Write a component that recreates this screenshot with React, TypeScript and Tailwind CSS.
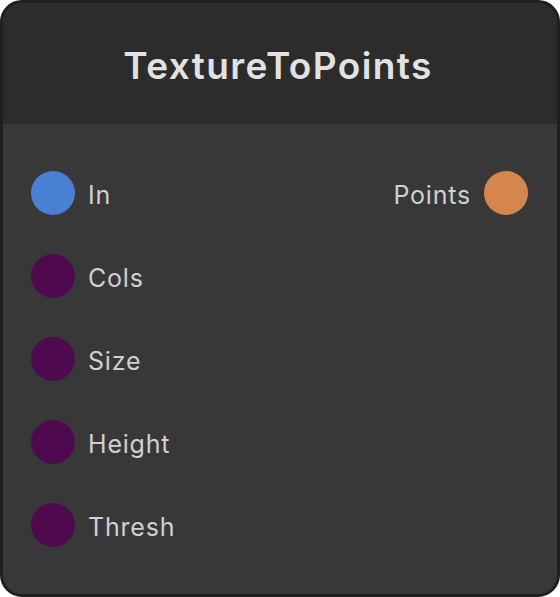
const inputs = ["In", "Cols", "Size", "Height", "Thresh"]

function Port({ color }: { color: string }) {
  return <span className={`block w-[44px] h-[44px] rounded-full shrink-0 ${color}`} />
}

export default function App() {
  return (
    <div className="w-[560px] h-[597px] bg-white">
      <div
        className="w-full h-full rounded-[22px] border-[3px] border-[#1f1f1f] bg-[#383838] overflow-hidden flex flex-col"
        style={{ fontFamily: "Inter, 'Noto Sans', sans-serif" }}
      >
        <div className="h-[121px] bg-[#2c2c2c] flex items-center justify-center shrink-0 pt-[5px] pr-[4px]">
          <h1 className="text-[37px] font-semibold tracking-[1.4px] text-[#e2e2e2]">TextureToPoints</h1>
        </div>
        <div className="flex justify-between pt-[47px] pl-[28px] pr-[29px]">
          <div className="flex flex-col gap-[39px]">
            {inputs.map((label, i) => (
              <div key={label} className="flex items-center gap-[13px]">
                <Port color={i === 0 ? "bg-[#4a80d4]" : "bg-[#4f0a4f]"} />
                <span className="text-[25px] tracking-[0.8px] text-[#d0d0d0] pt-[5px]">{label}</span>
              </div>
            ))}
          </div>
          <div className="flex items-start">
            <div className="flex items-center gap-[13px]">
              <span className="text-[25px] tracking-[0.8px] text-[#d0d0d0] pt-[5px]">Points</span>
              <Port color="bg-[#d4864c]" />
            </div>
          </div>
        </div>
      </div>
    </div>
  )
}
